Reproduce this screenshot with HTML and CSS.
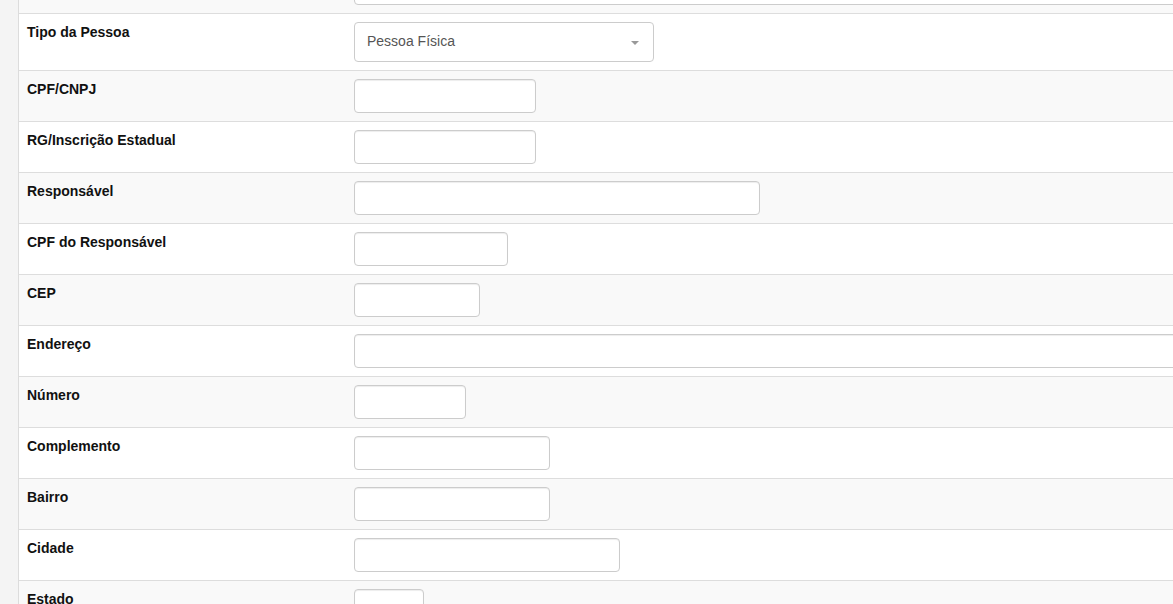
FILE: index.html
```html
<!DOCTYPE html>
<html lang="pt-BR">
<head>
<meta charset="utf-8">
<title>Cadastro</title>
<link rel="stylesheet" href="styles.css">
</head>
<body>
<div class="page">
  <aside class="side"></aside>
  <main class="main">
    <div class="form-table">
      <div class="row"><div class="label"></div><div class="field"><input class="input w-full" type="text"></div></div>
      <div class="row"><div class="label">Tipo da Pessoa</div><div class="field">
        <div class="select"><span class="select-text">Pessoa Física</span><span class="caret"></span></div>
      </div></div>
      <div class="row"><div class="label">CPF/CNPJ</div><div class="field"><input class="input w-182" type="text"></div></div>
      <div class="row"><div class="label">RG/Inscrição Estadual</div><div class="field"><input class="input w-182" type="text"></div></div>
      <div class="row"><div class="label">Responsável</div><div class="field"><input class="input w-406" type="text"></div></div>
      <div class="row"><div class="label">CPF do Responsável</div><div class="field"><input class="input w-154" type="text"></div></div>
      <div class="row"><div class="label">CEP</div><div class="field"><input class="input w-126" type="text"></div></div>
      <div class="row"><div class="label">Endereço</div><div class="field"><input class="input w-full" type="text"></div></div>
      <div class="row"><div class="label">Número</div><div class="field"><input class="input w-112" type="text"></div></div>
      <div class="row"><div class="label">Complemento</div><div class="field"><input class="input w-196" type="text"></div></div>
      <div class="row"><div class="label">Bairro</div><div class="field"><input class="input w-196" type="text"></div></div>
      <div class="row"><div class="label">Cidade</div><div class="field"><input class="input w-266" type="text"></div></div>
      <div class="row"><div class="label">Estado</div><div class="field"><input class="input w-70" type="text"></div></div>
    </div>
  </main>
</div>
</body>
</html>
```
FILE: styles.css
```css
html, body {
  margin: 0;
  padding: 0;
  height: 100%;
  overflow: hidden;
  background: #fff;
  font-family: "Liberation Sans", Arial, sans-serif;
  font-size: 14px;
  line-height: 20px;
  color: #111;
}
.page {
  display: flex;
  height: 100%;
}
.side {
  width: 18px;
  flex: 0 0 18px;
  background: #f4f4f4;
  border-right: 1px solid #dcdcdc;
}
.main {
  flex: 1;
  overflow: hidden;
}
.form-table {
  margin-top: -38px;
  width: 1400px;
}
.row {
  display: grid;
  grid-template-columns: 327px 1fr;
  border-top: 1px solid #ddd;
  background: #fff;
}
.row:nth-child(odd) {
  background: #f9f9f9;
}
.label {
  padding: 8px;
  font-weight: bold;
}
.field {
  padding: 8px;
  display: flex;
}
.input {
  box-sizing: border-box;
  height: 34px;
  border: 1px solid #ccc;
  border-radius: 4px;
  background: #fff;
  box-shadow: inset 0 1px 1px rgba(0,0,0,.075);
  padding: 6px 12px;
  font: inherit;
  margin: 0;
}
.w-full { width: 1000px; }
.w-182 { width: 182px; }
.w-406 { width: 406px; }
.w-154 { width: 154px; }
.w-126 { width: 126px; }
.w-112 { width: 112px; }
.w-196 { width: 196px; }
.w-266 { width: 266px; }
.w-70 { width: 70px; }
.select {
  box-sizing: border-box;
  width: 300px;
  height: 40px;
  border: 1px solid #ccc;
  border-radius: 4px;
  background: #fff;
  display: flex;
  align-items: center;
  justify-content: space-between;
  padding: 0 14px 2px 12px;
}
.select-text {
  color: #555;
}
.caret {
  width: 0;
  height: 0;
  border-left: 4px solid transparent;
  border-right: 4px solid transparent;
  border-top: 4px solid #999;
  margin-top: 3px;
}
```
